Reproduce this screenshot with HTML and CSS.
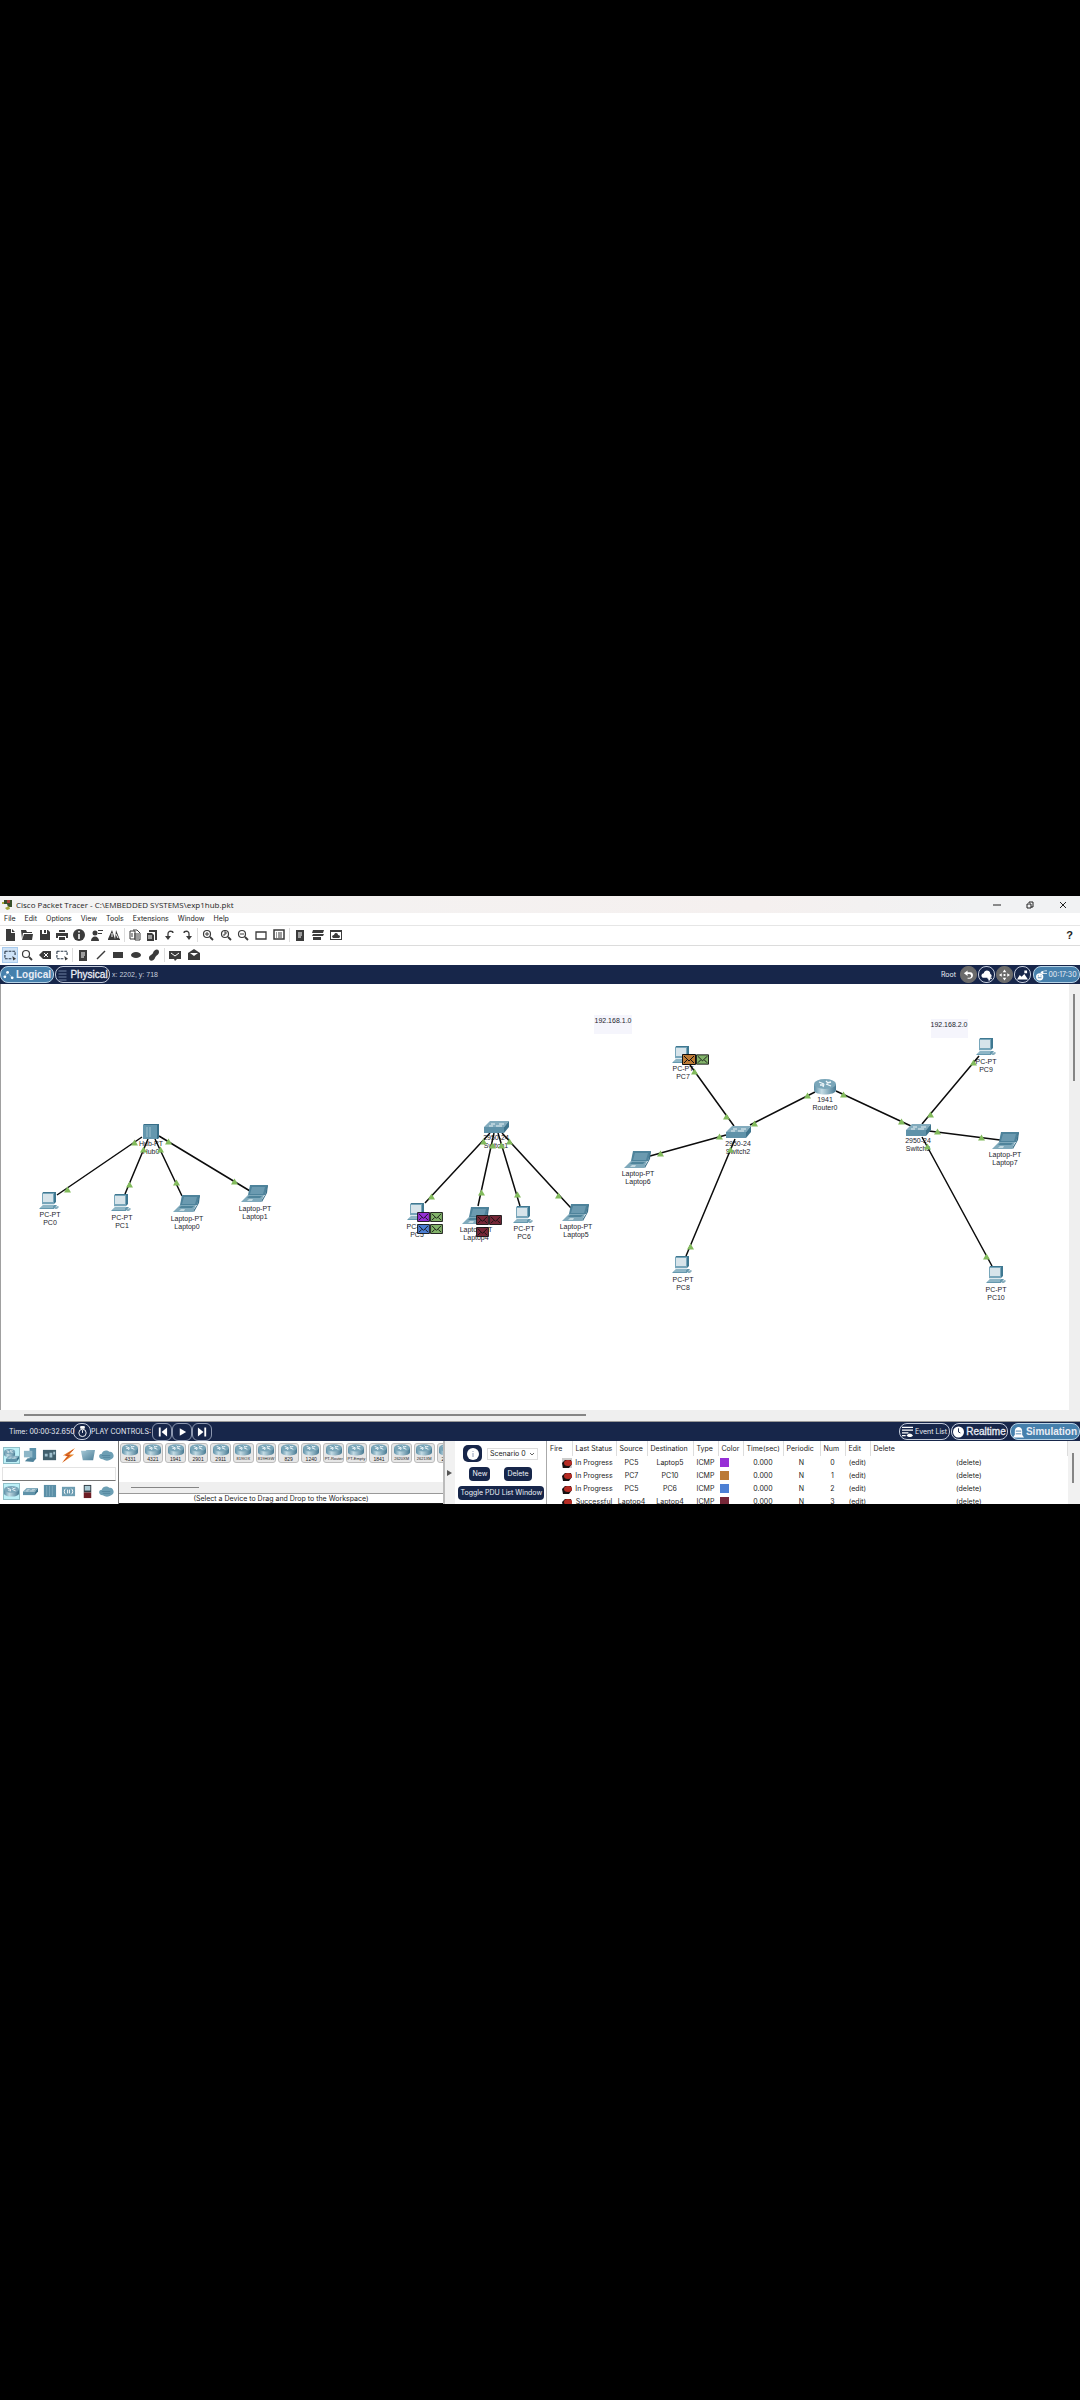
FILE: index.html
```html
<!DOCTYPE html>
<html lang="en">
<head>
<meta charset="utf-8">
<title>Cisco Packet Tracer</title>
<link rel="stylesheet" href="styles.css">
</head>
<body>
<svg class="defs" aria-hidden="true">
  <defs>
    <linearGradient id="steel" x1="0" y1="0" x2="1" y2="1"><stop offset="0" stop-color="#a9cbd9"/><stop offset="1" stop-color="#4d7f98"/></linearGradient>
    <linearGradient id="drum" x1="0" y1="0" x2="1" y2="0"><stop offset="0" stop-color="#5b8ea6"/><stop offset=".35" stop-color="#c3dbe4"/><stop offset="1" stop-color="#477a93"/></linearGradient>
    <symbol id="pc" viewBox="0 0 22 18"><path d="M0 17l4-4h14l-3 4z" fill="#6598ae"/><path d="M3 2l1-2h13v10l-2 2H3z" fill="#3f7891"/><path d="M3 1h12v11H3z" fill="#78a6ba"/><path d="M4 2h10v8H4z" fill="#d7e4ea"/><path d="M3 13h12M2 15h12" stroke="#b9d3dd" stroke-width="1"/><path d="M16 15l3-1 1 1-2 2h-2z" fill="#88afbf"/></symbol>
    <symbol id="laptop" viewBox="0 0 28 18"><path d="M9 0h18l-3 10H7z" fill="#4e839b"/><path d="M11 2h13l-2 7H9z" fill="#6b9ab0"/><path d="M26 1l1-1-1 8-5 9-1-1 4-6z" fill="#3b7089"/><path d="M7 10h16l-3 7H0z" fill="#7fa9bb"/><path d="M8 11h13l-2 2H6z" fill="#4f849b"/><path d="M8 14h4l-1 2H6z" fill="#c2d8e0"/></symbol>
    <symbol id="switch" viewBox="0 0 25 12"><path d="M0 6L6 0h19l-5 6z" fill="#82abbd"/><path d="M0 6h20v6H0z" fill="#5f92a9"/><path d="M20 6l5-6v6l-5 6z" fill="#3f748c"/><path d="M7 3h4m4 0h5M5 5h4m3 0h6" stroke="#e8f2f5" stroke-width="1"/></symbol>
    <symbol id="hub" viewBox="0 0 16 15"><path d="M0 1l1-1h15v14l-1 1H0z" fill="#386f89"/><path d="M0 1h14v14H0z" fill="#6497ae"/><path d="M4 3v10M7 3v10" stroke="#9ec0ce" stroke-width="1"/></symbol>
    <symbol id="router" viewBox="0 0 22 16"><path d="M0 5v6c0 6 22 6 22 0V5z" fill="url(#drum)"/><ellipse cx="11" cy="5" rx="11" ry="5" fill="#7aa6b9"/><path d="M5 3l5 2M17 3l-4 1M9 8l1-3M12 5l5 2M6 6h3M12 2l2 2" stroke="#f0f7fa" stroke-width="1.3"/></symbol>
    <symbol id="cloud" viewBox="0 0 16 12"><path d="M4 10C-1 10-1 4 3 4c1-4 6-4 8-2 4-1 7 6 2 8-3 2-6 2-9 0z" fill="#6d9fb4"/><path d="M3 6h9M4 8h8" stroke="#5488a0" stroke-width="1"/></symbol>
    <symbol id="mail" viewBox="0 0 14 11"><path d="M.5.5h13v10H.5z" stroke="#111" stroke-width="1"/><path d="M2 2l5 5 5-5M2 9l3-3M12 9L9 6" fill="none" stroke="#111" stroke-width="1"/></symbol>
    <symbol id="up" viewBox="0 0 8 7"><path d="M4 0l4 7H0z" fill="#82bb5c"/></symbol>
    <symbol id="i-new" viewBox="0 0 12 12"><path d="M2 0h5v4h4v8H2zM8 0l3 3H8z"/></symbol>
    <symbol id="i-open" viewBox="0 0 12 12"><path d="M0 1h5l1 2h5v1H2L1 10zM3 5h9l-1 6H1z"/></symbol>
    <symbol id="i-save" viewBox="0 0 12 12"><path fill-rule="evenodd" d="M1 1h2v4h5V1h1l2 2v8H1zM5 1h2v3H5z"/></symbol>
    <symbol id="i-print" viewBox="0 0 12 12"><path d="M3 1h6v2H3zM0 4h12v5h-2V7H2v2H0zM3 8h6v3H3z"/></symbol>
    <symbol id="i-info" viewBox="0 0 12 12"><circle cx="6" cy="6" r="6"/><path d="M6 2v1.500M6 5v5" stroke="#fff" stroke-width="1.500"/></symbol>
    <symbol id="i-user" viewBox="0 0 12 12"><circle cx="4" cy="4" r="2.500"/><path d="M0 12c0-6 8-6 8 0zM7 2h5V1H7zM7 5h4V4H7z"/></symbol>
    <symbol id="i-wizard" viewBox="0 0 12 12"><path d="M4 1l3 9H0zM8 1l4 10H7zM0 10h12v1H0z"/><path d="M4 4v4M8 5l2 4" stroke="#fff"/></symbol>
    <symbol id="i-copy" viewBox="0 0 12 12"><path d="M1 2h5v8H1zM4 1h4l3 3v7H6V4" fill="none" stroke="#3b3b3b"/><path d="M7 5h3M7 7h3M7 9h3M2 5h2M2 7h2" stroke="#3b3b3b"/></symbol>
    <symbol id="i-paste" viewBox="0 0 12 12"><path d="M3 1h8v10H9V3H3zM1 4h5l2 2v6H1z"/><path d="M2 7h4M2 9h4" stroke="#fff"/></symbol>
    <symbol id="i-undo" viewBox="0 0 12 12"><path d="M4 8V5c0-4 5-3 5-1" fill="none" stroke="#3b3b3b" stroke-width="1.300"/><path d="M1 7h6l-3 4z"/></symbol>
    <symbol id="i-redo" viewBox="0 0 12 12"><path d="M8 8V5c0-4-5-3-5-1" fill="none" stroke="#3b3b3b" stroke-width="1.300"/><path d="M5 7h6l-3 4z"/></symbol>
    <symbol id="i-zoom" viewBox="0 0 12 12"><circle cx="5" cy="5" r="3.500" fill="none" stroke="#3b3b3b" stroke-width="1.200"/><path d="M8 8l3 3" stroke="#3b3b3b" stroke-width="1.800"/></symbol>
    <symbol id="i-rect" viewBox="0 0 12 12"><path d="M1 3h10v7H1z" fill="none" stroke="#3b3b3b" stroke-width="1.300"/></symbol>
    <symbol id="i-panel" viewBox="0 0 12 12"><path d="M1 1h10v9H1z" fill="none" stroke="#3b3b3b" stroke-width="1.500"/><path d="M3 4h1m1 0h4M3 6h1m1 0h4M3 8h1m1 0h4" stroke="#3b3b3b"/></symbol>
    <symbol id="i-note" viewBox="0 0 12 12"><path d="M2 1h8v11H2z"/><path d="M4 4h4M4 6h4M4 8h3" stroke="#fff"/></symbol>
    <symbol id="i-stack" viewBox="0 0 12 12"><path d="M1 1h11l-1 3H0zM1 5h11l-1 2H0zM1 8h8v3H1z"/></symbol>
    <symbol id="i-pic" viewBox="0 0 12 12"><path fill-rule="evenodd" d="M0 1h12v10H0zM1 3v7h10V3z"/><path d="M3 9c-2-2 0-3 1-3 1-3 4-2 4 0 3 0 2 3 1 3z"/></symbol>
    <symbol id="i-select" viewBox="0 0 13 12"><path d="M1 2h11v5M1 2v8h7" fill="none" stroke="#2b3a4a" stroke-width="1.200" stroke-dasharray="3 1"/><path d="M9 7l4 3-3 2z"/></symbol>
    <symbol id="i-erase" viewBox="0 0 12 12"><path d="M0 6l4-4h8v8H4z"/><path d="M5 4l4 4M9 4L5 8" stroke="#fff"/></symbol>
    <symbol id="i-line" viewBox="0 0 12 12"><path d="M2 10l8-8" stroke="#3b3b3b" stroke-width="1.500"/></symbol>
    <symbol id="i-box" viewBox="0 0 12 12"><path d="M1 3h10v6H1z"/></symbol>
    <symbol id="i-oval" viewBox="0 0 12 12"><ellipse cx="6" cy="6" rx="5" ry="3"/></symbol>
    <symbol id="i-free" viewBox="0 0 12 12"><path d="M1 9c0-3 3-3 4-5 1-4 6-5 6-1 0 3-3 3-4 6s-6 4-6 0z"/></symbol>
    <symbol id="i-pdu" viewBox="0 0 12 12"><path d="M0 2h12v8H8l-2 2-1-2H0z"/><path d="M2 4l4 3 4-3" fill="none" stroke="#fff"/></symbol>
    <symbol id="i-cpdu" viewBox="0 0 12 12"><path d="M0 4l6-4 6 4v7H0z"/><path d="M2 4h8L6 7z" fill="#fff"/></symbol>
    <symbol id="bug" viewBox="0 0 10 10"><path d="M0 5l3-3h6l1 4-3 4H1z" fill="#171112"/><ellipse cx="6" cy="5" rx="4" ry="3" fill="#b52b23"/></symbol>
  </defs>
</svg>

<main class="app">
  <header class="titlebar">
    <svg class="appicon" viewBox="0 0 10 11"><path d="M2 1h8v7H6l-1-3H2z" fill="#38502b"/><path d="M5 1h3v3H5z" fill="#a9423a"/><path d="M0 3h2v2H0zM3 9l4-2 1 3-3 1z" fill="#a5a93c"/></svg>
    <h1>Cisco Packet Tracer - C:\EMBEDDED SYSTEMS\exp1hub.pkt</h1>
    <div class="winctl">
      <button aria-label="Minimize"><svg viewBox="0 0 8 8"><path d="M0 4h8"/></svg></button>
      <button aria-label="Restore"><svg viewBox="0 0 8 8"><path d="M1 3h4v4H1zM3 2V1h4v5H5"/></svg></button>
      <button aria-label="Close"><svg viewBox="0 0 8 8"><path d="M1 1l6 6M7 1L1 7"/></svg></button>
    </div>
  </header>

  <nav class="menubar">
    <button>File</button><button>Edit</button><button>Options</button><button>View</button><button>Tools</button><button>Extensions</button><button>Window</button><button>Help</button>
  </nav>

  <div class="toolbar">
    <div class="group g7">
      <button aria-label="New"><svg><use href="#i-new"/></svg></button><button aria-label="Open"><svg><use href="#i-open"/></svg></button><button aria-label="Save"><svg><use href="#i-save"/></svg></button><button aria-label="Print"><svg><use href="#i-print"/></svg></button><button aria-label="Network information"><svg><use href="#i-info"/></svg></button><button aria-label="User profile"><svg><use href="#i-user"/></svg></button><button aria-label="Activity wizard"><svg><use href="#i-wizard"/></svg></button>
    </div>
    <div class="group g4">
      <button aria-label="Copy"><svg><use href="#i-copy"/></svg></button><button aria-label="Paste"><svg><use href="#i-paste"/></svg></button><button aria-label="Undo"><svg><use href="#i-undo"/></svg></button><button aria-label="Redo"><svg><use href="#i-redo"/></svg></button>
    </div>
    <div class="group g5">
      <button aria-label="Zoom in"><svg viewBox="0 0 12 12"><use href="#i-zoom"/><path d="M3 5h4M5 3v4" stroke="#3b3b3b"/></svg></button><button aria-label="Zoom reset"><svg viewBox="0 0 12 12"><use href="#i-zoom"/><path d="M4 3h2v2H4v2" fill="none" stroke="#3b3b3b"/></svg></button><button aria-label="Zoom out"><svg viewBox="0 0 12 12"><use href="#i-zoom"/><path d="M3 5h4" stroke="#3b3b3b"/></svg></button><button aria-label="Show viewport"><svg><use href="#i-rect"/></svg></button><button aria-label="Show workspace list"><svg><use href="#i-panel"/></svg></button>
    </div>
    <div class="group g3">
      <button aria-label="Command log"><svg><use href="#i-note"/></svg></button><button aria-label="Custom devices"><svg><use href="#i-stack"/></svg></button><button aria-label="Cluster"><svg><use href="#i-pic"/></svg></button>
    </div>
    <button class="help" aria-label="Help contents">?</button>
  </div>

  <div class="toolbar second">
    <div class="group g4">
      <button class="on" aria-label="Select"><svg><use href="#i-select"/></svg></button><button aria-label="Inspect"><svg><use href="#i-zoom"/></svg></button><button aria-label="Delete"><svg><use href="#i-erase"/></svg></button><button aria-label="Resize"><svg><use href="#i-select"/></svg></button>
    </div>
    <div class="group g5">
      <button aria-label="Place note"><svg><use href="#i-note"/></svg></button><button aria-label="Draw line"><svg><use href="#i-line"/></svg></button><button aria-label="Draw rectangle"><svg><use href="#i-box"/></svg></button><button aria-label="Draw ellipse"><svg><use href="#i-oval"/></svg></button><button aria-label="Draw freeform"><svg><use href="#i-free"/></svg></button>
    </div>
    <div class="group g2">
      <button aria-label="Add simple PDU"><svg><use href="#i-pdu"/></svg></button><button aria-label="Add complex PDU"><svg><use href="#i-cpdu"/></svg></button>
    </div>
  </div>

  <div class="bar">
    <button class="pill on logical"><svg viewBox="0 0 12 10"><path d="M2 7l3-5M5 2l5 6" stroke="#b9d5e6" stroke-dasharray="1 1"/><circle cx="2" cy="7" r="1.500"/><circle cx="5" cy="2" r="1.500"/><circle cx="10" cy="8" r="1.500"/></svg>Logical</button>
    <button class="pill physical"><svg viewBox="0 0 10 12"><path d="M1 2h8M1 5h8M1 8h8M1 11h8" stroke="#7182a3"/></svg>Physical</button>
    <span class="coords">x: 2202, y: 718</span>
    <div class="right">
      <span class="root">Root</span>
      <button class="round grey" aria-label="Back"><svg viewBox="0 0 12 12"><path d="M1 4l4-3v2h3c4 0 4 7-1 7H5V9h2c3 0 2-4 0-4H5v2z"/></svg></button>
      <button class="round" aria-label="New cluster"><svg viewBox="0 0 12 12"><path d="M2 9c-3-2-1-5 1-5 1-5 8-3 7 1 3 1 1 4 0 4zM8 7h2v2h2v1h-2v2H8v-2H7V9h1z"/></svg></button>
      <button class="round grey" aria-label="Move object"><svg viewBox="0 0 12 12"><path d="M6 0l2 3H4zM6 12l2-3H4zM0 6l3-2v4zM12 6L9 4v4zM5 5h2v2H5z"/></svg></button>
      <button class="round" aria-label="Set background"><svg viewBox="0 0 12 12"><path d="M0 11l3-5 2 2 3-3 4 6zM8 1h3v3H8z"/></svg></button>
      <button class="pill on clock"><svg viewBox="0 0 12 12"><circle cx="4" cy="8" r="4"/><path d="M5 4c0-2 2-3 7-3v1H8v2h4v1H7z"/><path d="M2 7h1m2 0h1M2 9h4" stroke="#4680ac"/></svg>00:17:30</button>
    </div>
  </div>

  <section class="workspace">
    <svg class="canvas">
      <path d="M0 0v426" stroke="#a0a0a0" stroke-width="2"/>
      <g class="notes"><rect x="594" y="31" width="38" height="19"/><rect x="931" y="35" width="37" height="19"/></g>
      <g class="labels">
        <text x="613" y="39">192.168.1.0</text><text x="949" y="43">192.168.2.0</text>
        <text x="151" y="162">Hub-PT</text><text x="151" y="170">Hub0</text>
        <text x="50" y="233">PC-PT</text><text x="50" y="241">PC0</text>
        <text x="122" y="236">PC-PT</text><text x="122" y="244">PC1</text>
        <text x="187" y="237">Laptop-PT</text><text x="187" y="245">Laptop0</text>
        <text x="255" y="227">Laptop-PT</text><text x="255" y="235">Laptop1</text>
        <text x="496" y="156">2950-24</text><text x="496" y="164">Switch1</text>
        <text x="417" y="245">PC-PT</text><text x="417" y="253">PC5</text>
        <text x="476" y="248">Laptop-PT</text><text x="476" y="256">Laptop4</text>
        <text x="524" y="247">PC-PT</text><text x="524" y="255">PC6</text>
        <text x="576" y="245">Laptop-PT</text><text x="576" y="253">Laptop5</text>
        <text x="683" y="87">PC-PT</text><text x="683" y="95">PC7</text>
        <text x="825" y="118">1941</text><text x="825" y="126">Router0</text>
        <text x="738" y="162">2950-24</text><text x="738" y="170">Switch2</text>
        <text x="638" y="192">Laptop-PT</text><text x="638" y="200">Laptop6</text>
        <text x="683" y="298">PC-PT</text><text x="683" y="306">PC8</text>
        <text x="986" y="80">PC-PT</text><text x="986" y="88">PC9</text>
        <text x="918" y="159">2950-24</text><text x="918" y="167">Switch3</text>
        <text x="1005" y="173">Laptop-PT</text><text x="1005" y="181">Laptop7</text>
        <text x="996" y="308">PC-PT</text><text x="996" y="316">PC10</text>
      </g>
      <path class="links" d="M142 153L57 211M148 155L125 210M155 155L182 212M159 152L250 207M490 149L425 219M494 149L478 222M498 149L520 222M502 149L571 224M690 81L734 142M650 172L726 151M750 141L815 108M735 155L686 272M836 107L911 142M979 72L922 140M929 147L1000 156M922 153L992 282"/>
      <g>
        <use href="#hub" x="143" y="140" width="16" height="15"/>
        <use href="#pc" x="39" y="208" width="22" height="18"/><use href="#pc" x="111" y="210" width="22" height="18"/><use href="#laptop" x="173" y="211" width="28" height="18"/><use href="#laptop" x="241" y="201" width="28" height="18"/>
        <use href="#switch" x="484" y="137" width="25" height="12"/>
        <use href="#pc" x="407" y="219" width="22" height="18"/><use href="#laptop" x="462" y="223" width="28" height="18"/><use href="#pc" x="513" y="222" width="22" height="18"/><use href="#laptop" x="562" y="220" width="28" height="18"/>
        <use href="#pc" x="672" y="62" width="22" height="18"/><use href="#router" x="814" y="95" width="22" height="16"/><use href="#switch" x="726" y="142" width="25" height="12"/><use href="#laptop" x="624" y="167" width="28" height="18"/><use href="#pc" x="672" y="272" width="22" height="18"/>
        <use href="#pc" x="976" y="54" width="22" height="18"/><use href="#switch" x="906" y="140" width="25" height="12"/><use href="#laptop" x="992" y="148" width="28" height="18"/><use href="#pc" x="986" y="282" width="22" height="18"/>
      </g>
      <g>
        <use href="#up" x="131" y="155" width="7" height="7"/><use href="#up" x="64" y="202" width="7" height="7"/><use href="#up" x="140" y="162" width="7" height="7"/><use href="#up" x="126" y="197" width="7" height="7"/><use href="#up" x="157" y="162" width="7" height="7"/><use href="#up" x="173" y="195" width="7" height="7"/><use href="#up" x="165" y="154" width="7" height="7"/><use href="#up" x="231" y="194" width="7" height="7"/>
        <use href="#up" x="480" y="154" width="7" height="7"/><use href="#up" x="428" y="209" width="7" height="7"/><use href="#up" x="489" y="158" width="7" height="7"/><use href="#up" x="478" y="205" width="7" height="7"/><use href="#up" x="498" y="158" width="7" height="7"/><use href="#up" x="514" y="207" width="7" height="7"/><use href="#up" x="506" y="154" width="7" height="7"/><use href="#up" x="555" y="208" width="7" height="7"/>
        <use href="#up" x="691" y="84" width="7" height="7"/><use href="#up" x="723" y="129" width="7" height="7"/><use href="#up" x="657" y="166" width="7" height="7"/><use href="#up" x="716" y="149" width="7" height="7"/><use href="#up" x="751" y="136" width="7" height="7"/><use href="#up" x="804" y="108" width="7" height="7"/><use href="#up" x="727" y="162" width="7" height="7"/><use href="#up" x="687" y="259" width="7" height="7"/>
        <use href="#up" x="840" y="107" width="7" height="7"/><use href="#up" x="898" y="134" width="7" height="7"/><use href="#up" x="970" y="75" width="7" height="7"/><use href="#up" x="927" y="127" width="7" height="7"/><use href="#up" x="934" y="144" width="7" height="7"/><use href="#up" x="978" y="150" width="7" height="7"/><use href="#up" x="924" y="159" width="7" height="7"/><use href="#up" x="983" y="269" width="7" height="7"/>
      </g>
      <g>
        <use href="#mail" x="417" y="228" width="13" height="10" fill="#962fd6"/><use href="#mail" x="430" y="228" width="13" height="10" fill="#82b36a"/><use href="#mail" x="417" y="240" width="13" height="10" fill="#4d80d4"/><use href="#mail" x="430" y="240" width="13" height="10" fill="#82b36a"/>
        <use href="#mail" x="476" y="231" width="13" height="10" fill="#762737"/><use href="#mail" x="489" y="231" width="13" height="10" fill="#762737"/><use href="#mail" x="476" y="243" width="13" height="10" fill="#762737"/>
        <use href="#mail" x="682" y="70" width="14" height="11" fill="#bb7a35"/><use href="#mail" x="696" y="70" width="13" height="11" fill="#82b36a"/>
      </g>
    </svg>
    <div class="vscroll"><i></i></div>
    <div class="hscroll"><i></i></div>
  </section>

  <div class="bar play">
    <span class="time">Time: 00:00:32.650</span>
    <button class="round" aria-label="Power cycle"><svg viewBox="0 0 12 12"><circle cx="6" cy="7" r="4" fill="none" stroke="#fff"/><path d="M4 0h4v2H4zM6 4v3" stroke="#fff"/></svg></button>
    <span>PLAY CONTROLS:</span>
    <button class="step" aria-label="Go back"><svg viewBox="0 0 12 12"><path d="M2 1h2v10H2zM11 1v10L5 6z"/></svg></button>
    <button class="step" aria-label="Play"><svg viewBox="0 0 12 12"><path d="M3 2l7 4-7 4z"/></svg></button>
    <button class="step" aria-label="Go forward"><svg viewBox="0 0 12 12"><path d="M8 1h2v10H8zM1 1v10l6-5z"/></svg></button>
    <div class="right">
      <button class="pill events"><svg viewBox="0 0 12 12"><path d="M0 1h12M0 4h12M0 7h7M0 10h4" stroke="#fff" stroke-width="1.500"/><path d="M5 10c2-3 5-3 7 0-2 2-5 2-7 0z"/></svg>Event List</button>
      <button class="pill real"><svg viewBox="0 0 12 12"><circle cx="6" cy="6" r="6"/><path d="M6 2v4l2 1" fill="none" stroke="#17264a"/></svg>Realtime</button>
      <button class="pill on sim"><svg viewBox="0 0 12 12"><path d="M2 5c0-6 8-6 8 0v4l2 3H0l2-3z"/><path d="M3 5h6M3 8h6" stroke="#4680ac"/></svg>Simulation</button>
    </div>
  </div>

  <section class="dock">
    <div class="types">
      <div class="typerow">
        <button class="on" aria-label="Network devices"><svg viewBox="0 0 16 16"><use href="#router" y="1" width="12" height="9"/><use href="#switch" x="2" y="8" width="14" height="7"/></svg></button>
        <button aria-label="End devices"><svg viewBox="0 0 16 16"><path d="M7 0h7v12H7z" fill="#5d92ab"/><path d="M1 3h9v7H1z" fill="#8db6c7"/><path d="M2 14l3-3h9l-3 4z" fill="#4f839b"/></svg></button>
        <button aria-label="Components"><svg viewBox="0 0 16 16"><path d="M1 2h14v11H1z" fill="#405f6c"/><path d="M3 6h3v3H3zM8 5h3v5H8zM12 4h2v3h-2z" fill="#9fc0cd"/></svg></button>
        <button aria-label="Connections"><svg viewBox="0 0 16 16"><path d="M15 0L2 8h5l-6 8 13-9H9z" fill="#e8832a"/><path d="M13 2L5 8h4l-6 6" fill="none" stroke="#c94e28"/></svg></button>
        <button aria-label="Miscellaneous"><svg viewBox="0 0 16 16"><path d="M1 3h5l1-1h9l-2 11H3z" fill="url(#steel)"/></svg></button>
        <button aria-label="Multiuser connection"><svg viewBox="0 0 16 12"><use href="#cloud"/></svg></button>
      </div>
      <input class="search" type="text" aria-label="Search devices">
      <div class="typerow">
        <button class="on" aria-label="Routers"><svg><use href="#router"/></svg></button>
        <button aria-label="Switches"><svg><use href="#switch"/></svg></button>
        <button aria-label="Hubs"><svg viewBox="0 0 16 16"><path d="M2 1h13v13H2z" fill="#5b8fa7"/><path d="M5 2v11M8 2v11M11 2v11" stroke="#7eaabd"/></svg></button>
        <button aria-label="Wireless devices"><svg viewBox="0 0 16 16"><path d="M1 3h14v10H1z" fill="#6d9db2"/><path d="M5 5c-2 1-2 5 0 6M11 5c2 1 2 5 0 6M7 6v4M9 6v4" fill="none" stroke="#fff"/></svg></button>
        <button aria-label="Security"><svg viewBox="0 0 16 16"><path d="M4 1h8v8H4z" fill="#303b42"/><path d="M5 2h6v5H5z" fill="#a9c9d4"/><path d="M4 9h8v6H4z" fill="#6e1d24"/></svg></button>
        <button aria-label="WAN emulation"><svg viewBox="0 0 16 12"><use href="#cloud"/></svg></button>
      </div>
    </div>

    <div class="models">
      <div class="tiles">
        <button><svg><use href="#router"/></svg>4331</button><button><svg><use href="#router"/></svg>4321</button><button><svg><use href="#router"/></svg>1941</button><button><svg><use href="#router"/></svg>2901</button><button><svg><use href="#router"/></svg>2911</button><button class="long"><svg><use href="#router"/></svg>819IOX</button><button class="long"><svg><use href="#router"/></svg>819HGW</button><button><svg><use href="#router"/></svg>829</button><button><svg><use href="#router"/></svg>1240</button><button class="long"><svg><use href="#router"/></svg>PT-Router</button><button class="long"><svg><use href="#router"/></svg>PT-Empty</button><button><svg><use href="#router"/></svg>1841</button><button class="long"><svg><use href="#router"/></svg>2620XM</button><button class="long"><svg><use href="#router"/></svg>2621XM</button><button><svg><use href="#router"/></svg>2811</button>
      </div>
      <div class="tilescroll"><i></i></div>
      <p>(Select a Device to Drag and Drop to the Workspace)</p>
    </div>

    <div class="splitter"><svg viewBox="0 0 5 6"><path d="M0 0l5 3-5 3z" fill="#555"/></svg></div>

    <div class="scenario">
      <div class="srow">
        <button class="info" aria-label="Scenario description"><svg viewBox="0 0 12 12"><circle cx="6" cy="6" r="6"/><path d="M6 3v1M6 5v4" stroke="#8f9bb5"/></svg></button>
        <div class="pick"><select aria-label="Scenario"><option>Scenario 0</option></select><svg viewBox="0 0 6 4"><path d="M1 1l2 2 2-2" fill="none" stroke="#666"/></svg></div>
      </div>
      <div class="srow mid"><button class="navy">New</button><button class="navy">Delete</button></div>
      <div class="srow"><button class="navy wide">Toggle PDU List Window</button></div>
    </div>

    <div class="pdus">
      <table>
        <colgroup><col class="c25"><col class="c44"><col class="c31"><col class="c46"><col class="c25"><col class="c25"><col class="c40"><col class="c37"><col class="c25"><col class="c25"><col></colgroup>
        <thead><tr><th>Fire</th><th>Last Status</th><th>Source</th><th>Destination</th><th>Type</th><th>Color</th><th>Time(sec)</th><th>Periodic</th><th>Num</th><th>Edit</th><th>Delete</th></tr></thead>
        <tbody>
          <tr><td class="fire sel"><svg><use href="#bug"/></svg></td><td>In Progress</td><td>PC5</td><td>Laptop5</td><td>ICMP</td><td class="col"><i class="purple"></i></td><td>0.000</td><td>N</td><td>0</td><td>(edit)</td><td>(delete)</td></tr>
          <tr><td class="fire"><svg><use href="#bug"/></svg></td><td>In Progress</td><td>PC7</td><td>PC10</td><td>ICMP</td><td class="col"><i class="orange"></i></td><td>0.000</td><td>N</td><td>1</td><td>(edit)</td><td>(delete)</td></tr>
          <tr><td class="fire"><svg><use href="#bug"/></svg></td><td>In Progress</td><td>PC5</td><td>PC6</td><td>ICMP</td><td class="col"><i class="blue"></i></td><td>0.000</td><td>N</td><td>2</td><td>(edit)</td><td>(delete)</td></tr>
          <tr><td class="fire"><svg><use href="#bug"/></svg></td><td>Successful</td><td>Laptop4</td><td>Laptop4</td><td>ICMP</td><td class="col"><i class="maroon"></i></td><td>0.000</td><td>N</td><td>3</td><td>(edit)</td><td>(delete)</td></tr>
        </tbody>
      </table>
      <div class="pduscroll"><i></i></div>
    </div>
  </section>
</main>
</body>
</html>
```
FILE: styles.css
```css
* { box-sizing: border-box; }
body {
  margin: 0;
  min-height: 100vh;
  display: flex;
  align-items: center;
  background: #000;
  color: #1c1c1c;
  font: 7px/8px Inter, "Liberation Sans", sans-serif;
}
button, input, select { margin: 0; padding: 0; border: 0; background: none; color: inherit; font: inherit; }
svg { display: block; }
.defs { position: absolute; width: 0; height: 0; }
.app { flex: 1; min-width: 0; background: #fff; }

.titlebar {
  display: flex;
  align-items: center;
  gap: 4px;
  height: 17px;
  padding-left: 2px;
  background: linear-gradient(90deg, #f3f3f3, #f5f0ef 70%, #f1f2f3 90%);
}
.appicon { width: 10px; height: 11px; }
.titlebar h1 { margin: 0; font: 400 8px/12px "Open Sans", sans-serif; }
.winctl { display: flex; gap: 25px; margin-left: auto; padding-right: 13px; }
.winctl svg { width: 8px; height: 8px; fill: none; stroke: #222; stroke-width: 1; }

.menubar { display: flex; align-items: center; gap: 9px; height: 13px; padding: 0 4px; border-bottom: 1px solid #e6e6e6; }

.toolbar { display: flex; align-items: center; height: 20px; padding: 0 0 1px 1px; border-bottom: 1px solid #dcdcdc; }
.toolbar.second { height: 19px; padding-bottom: 2px; border: 0; }
.group { display: grid; grid-auto-flow: column; grid-auto-columns: 1fr; padding-right: 1px; margin-right: 1px; border-right: 1px solid #ddd; }
.group:last-of-type { border: 0; }
.group button { display: flex; justify-content: center; padding: 1px 0; }
.group button.on { margin: 0 2px; background: #cfe3f7; outline: 1px solid #a9cbed; }
.group svg { width: 12px; height: 12px; fill: #3b3b3b; }
.g7 { width: 124px; }
.g5 { width: 91px; }
.g4 { width: 72px; }
.g3 { width: 55px; }
.g2 { width: 38px; }
.help { margin-left: auto; padding-right: 7px; font: 700 11px/12px "Liberation Sans", sans-serif; }

.bar { display: flex; align-items: center; height: 19px; background: #17264a; color: #e9edf5; }
.right { display: flex; align-items: center; gap: 1px; margin-left: auto; }
.pill {
  display: flex;
  align-items: center;
  justify-content: center;
  gap: 2px;
  height: 17px;
  border: 1px solid #c3cbdb;
  border-radius: 8px;
  white-space: nowrap;
}
.bar svg { flex: none; width: 11px; height: 12px; fill: #fff; }
.pill.on { background: #4680ac; border-color: #b8d3e6; }
.logical, .sim, .physical, .real { font: 700 10px/12px "Liberation Sans", sans-serif; }
.logical { width: 54px; }
.physical { width: 55px; margin-left: 1px; }
.physical, .real { font-weight: 400; -webkit-text-stroke: 0.3px currentColor; }
.coords { margin-left: 2px; color: #c6cddc; font-family: "Liberation Sans", sans-serif; }
.root { margin-right: 3px; }
.round { display: flex; align-items: center; justify-content: center; width: 17px; height: 17px; border: 1px solid #c3cbdb; border-radius: 8px; }
.round.grey { background: #6b6b6b; border-color: #6b6b6b; }
.clock { width: 47px; gap: 1px; margin-left: 1px; }
.time { width: 73px; padding-left: 9px; white-space: nowrap; }
.play .round { flex: none; width: 18px; }
.play > span { white-space: nowrap; }
.play > span + .step { margin-left: 1px; }
.step { display: flex; align-items: center; justify-content: center; width: 20px; height: 18px; border: 1px solid #8d98b0; border-radius: 6px; }
.events { width: 51px; }
.real { width: 57px; }
.sim { width: 70px; margin-left: 1px; }

.workspace { display: grid; grid-template: 426px 12px / 1fr 11px; background: #efefef; }
.canvas { width: 100%; height: 100%; background: #fff; overflow: hidden; }
.notes { fill: #f5f5fc; }
.labels { font: 7px "Liberation Sans", sans-serif; fill: #24242c; text-anchor: middle; }
.links { stroke: #0c0c0c; stroke-width: 1.5px; fill: none; }
.vscroll i { display: block; width: 2px; height: 87px; margin: 10px 0 0 4px; background: #858585; }
.hscroll { grid-column: 1 / -1; border-bottom: 1px solid #999; }
.hscroll i { display: block; width: 52%; height: 2px; margin: 4px 0 0 24px; background: #858585; }

.dock { display: flex; height: 63px; overflow: hidden; }
.types { width: 119px; flex: none; padding: 6px 2px 0; border-right: 1px solid #777; }
.typerow { display: grid; grid-template-columns: repeat(6, 1fr); justify-items: center; height: 18px; }
.typerow button { display: flex; align-items: center; justify-content: center; width: 17px; height: 17px; }
.typerow .on { background: #bdf0f7; border: 1px solid #8fbfc8; }
.typerow svg { width: 15px; height: 15px; }
.search { display: block; width: 100%; height: 14px; margin: 2px 0; border: 1px solid #e3e3e3; border-bottom-color: #777; }
.models { flex: 1 1 323px; min-width: 0; }
.tiles { display: grid; grid-auto-flow: column; grid-auto-columns: 7%; height: 41px; padding: 2px 0 0 1px; overflow: hidden; }
.tiles button {
  display: flex;
  flex-direction: column;
  align-items: center;
  height: 20px;
  margin-right: 2px;
  border: 1px solid #bcbcbc;
  border-radius: 3px;
  background: #e6e6e6;
  font: 5px/6px "Liberation Sans", sans-serif;
}
.tiles .long { font-size: 4px; }
.tiles svg { flex: none; width: 16px; height: 12px; }
.tilescroll { height: 12px; padding: 5px 0 0 12px; background: #efefef; border-bottom: 1px solid #999; }
.tilescroll i { display: block; width: 68px; height: 1px; background: #858585; }
.models p { margin: 0; text-align: center; line-height: 9px; border-bottom: 1px solid #111; white-space: nowrap; }
.splitter { display: flex; align-items: center; flex: none; width: 12px; padding-left: 2px; border-left: 2px solid #bbb; background: #f1f1f1; }
.splitter svg { width: 5px; height: 6px; }

.scenario { flex: none; width: 92px; padding: 4px 2px 0; border-right: 1px solid #aaa; }
.srow { display: flex; align-items: center; justify-content: center; gap: 5px; height: 17px; }
.srow.mid { gap: 14px; height: 14px; margin: 5px 0 3px; }
.info { display: flex; align-items: center; justify-content: center; width: 19px; height: 17px; border-radius: 5px; background: #17264a; }
.info svg { width: 12px; height: 12px; fill: #fff; }
.pick { display: grid; align-items: center; width: 51px; height: 12px; border: 1px solid #ddd; }
.pick > * { grid-area: 1 / 1; }
.pick select { appearance: none; width: 100%; padding-left: 2px; }
.pick svg { justify-self: end; width: 6px; height: 4px; margin-right: 2px; pointer-events: none; }
.navy { height: 14px; padding: 0 3px; border-radius: 4px; background: #17264a; color: #eef1f7; white-space: nowrap; }
.wide { width: 86px; }

.pdus { display: flex; flex: none; width: 533px; }
table { flex: 1; table-layout: fixed; border-collapse: collapse; align-self: flex-start; }
th { height: 15px; padding: 1px 0 0 3px; border-right: 1px solid #ddd; font-weight: 400; text-align: left; white-space: nowrap; }
td { height: 13px; padding: 0; text-align: center; white-space: nowrap; }
.c25 { width: 25px; }
.c31 { width: 31px; }
.c37 { width: 37px; }
.c40 { width: 40px; }
.c44 { width: 44px; }
.c46 { width: 46px; }
.fire svg { width: 10px; height: 10px; margin-left: auto; }
.sel svg { background: #ccc; }
.col i { display: block; width: 9px; height: 9px; margin-left: 2px; }
.purple { background: #962fd6; }
.orange { background: #bb7a35; }
.blue { background: #4d80d4; }
.maroon { background: #762737; }
.pduscroll { width: 12px; background: #f1f1f1; }
.pduscroll i { display: block; width: 2px; height: 30px; margin: 12px 0 0 4px; background: #858585; }
```
